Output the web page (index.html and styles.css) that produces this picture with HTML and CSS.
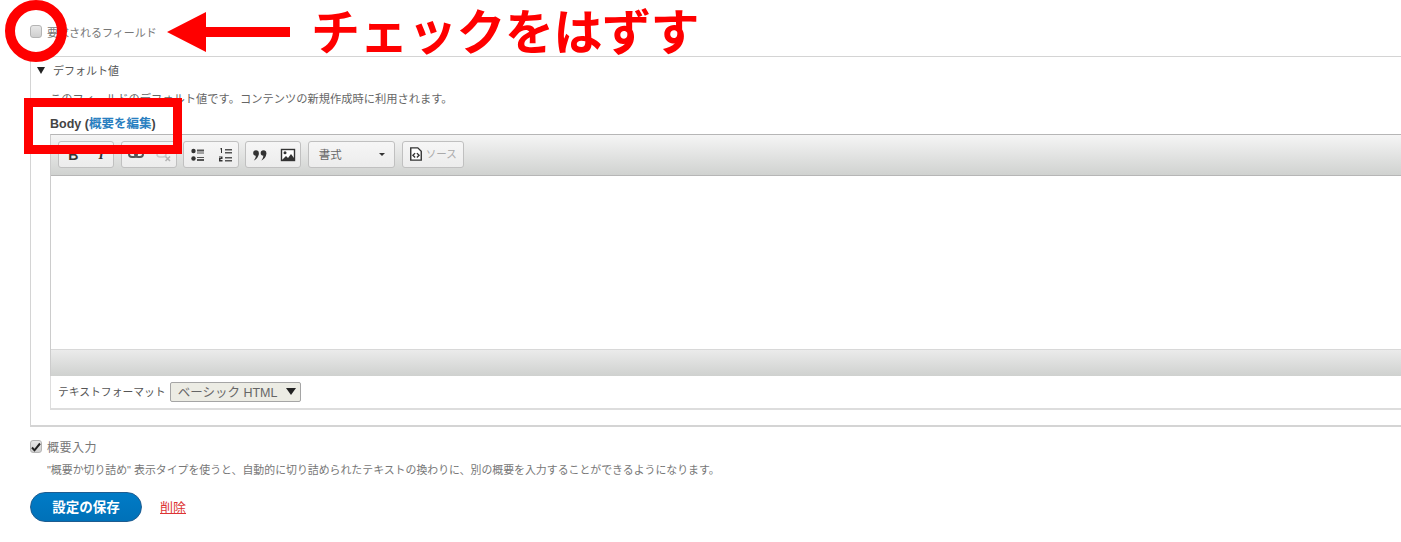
FILE: index.html
```html
<!DOCTYPE html>
<html lang="ja">
<head>
<meta charset="utf-8">
<title>フィールド設定</title>
<link rel="stylesheet" href="styles.css">
</head>
<body>
<main class="page">
  <label class="check-row required-row"><span class="box"></span><span>要求されるフィールド</span></label>

  <section class="fieldset">
    <div class="legend"><span class="tri"></span><span>デフォルト値</span></div>
    <p class="intro">このフィールドのデフォルト値です。コンテンツの新規作成時に利用されます。</p>
    <div class="body-label">Body (<a href="#">概要を編集</a>)</div>

    <div class="editor">
      <div class="toolbar">
        <div class="group">
          <span class="tool"><b class="bold">B</b></span>
          <span class="tool"><i class="ital">I</i></span>
        </div>
        <div class="group">
          <span class="tool">
            <svg width="16" height="16" viewBox="0 0 16 16"><rect x="1" y="4" width="8" height="6" rx="3" fill="none" stroke="#555" stroke-width="2"/><rect x="7" y="4" width="8" height="6" rx="3" fill="none" stroke="#555" stroke-width="2"/></svg>
          </span>
          <span class="tool">
            <svg width="16" height="16" viewBox="0 0 16 16"><rect x="1" y="4" width="9" height="6" rx="3" fill="none" stroke="#ccc" stroke-width="1.600"/><path d="M9.500 9.500l4.500 4.500M14 9.500L9.500 14" stroke="#b4b4b4" stroke-width="1.600"/></svg>
          </span>
        </div>
        <div class="group">
          <span class="tool">
            <svg width="16" height="16" viewBox="0 0 16 16"><circle cx="3.500" cy="4" r="2.200" fill="#333"/><circle cx="3.500" cy="11.500" r="2.200" fill="#333"/><path d="M7 2.500h7v2H7zM7 5.500h7v1H7zM7 10h7v1H7zM7 12h7v2H7z" fill="#555"/></svg>
          </span>
          <span class="tool">
            <svg width="16" height="16" viewBox="0 0 16 16"><path d="M2.500 1h1.500v5H3V2.500h-.5zM1 9.500h3.500V12H2.500v1h2v1.500H1V11h2v-.500H1z" fill="#333"/><path d="M7 2h7v1.500H7zM7 5h7v1.500H7zM7 10h7v1.500H7zM7 13h7v1.500H7z" fill="#555"/></svg>
          </span>
        </div>
        <div class="group">
          <span class="tool">
            <svg width="16" height="16" viewBox="0 0 16 16"><circle cx="4" cy="6" r="2.800" fill="#333"/><path d="M6.800 6c0 4-2 6-5 7.500 1.500-1.500 2-3.500 2-5z" fill="#333"/><circle cx="11.500" cy="6" r="2.800" fill="#333"/><path d="M14.300 6c0 4-2 6-5 7.500 1.500-1.500 2-3.500 2-5z" fill="#333"/></svg>
          </span>
          <span class="tool">
            <svg width="16" height="16" viewBox="0 0 16 16"><rect x="1.500" y="2.500" width="13" height="11" fill="#fff" stroke="#333" stroke-width="1.400"/><circle cx="5" cy="5.800" r="1.500" fill="#333"/><path d="M2 13l4-4 2 2 3-4 3 4v2z" fill="#333"/></svg>
          </span>
        </div>
        <div class="group combo"><span>書式</span><span class="caret"></span></div>
        <div class="group source">
          <svg width="14" height="14" viewBox="0 0 16 16"><path d="M2 1h8l4 4v10H2z" fill="#fff" stroke="#333" stroke-width="1.600"/><path d="M7 7L4.500 9.500 7 12M9 7l2.500 2.500L9 12" fill="none" stroke="#333" stroke-width="1.600"/></svg>
          <span>ソース</span>
        </div>
      </div>
      <div class="edit-area"></div>
      <div class="bottom-bar"></div>
    </div>

    <div class="format-wrap">
      <span class="format-label">テキストフォーマット</span>
      <span class="select">ベーシック HTML<span class="sel-tri"></span></span>
    </div>
  </section>

  <label class="check-row summary-row"><span class="box checked"><svg width="10" height="10" viewBox="0 0 10 10"><path d="M1 5.500l2.500 2.800L9 1.500" fill="none" stroke="#222" stroke-width="2"/></svg></span><span>概要入力</span></label>
  <p class="hint">"概要か切り詰め" 表示タイプを使うと、自動的に切り詰められたテキストの換わりに、別の概要を入力することができるようになります。</p>
  <div class="actions">
    <span class="save">設定の保存</span>
    <a class="delete" href="#">削除</a>
  </div>
</main>

<div class="mark-circle"></div>
<div class="mark-rect"></div>
<svg class="mark-arrow" width="124" height="40" viewBox="0 0 124 40"><path d="M0 20L39 0v15h84v10H39v15z" fill="#ff0000"/></svg>
<div class="mark-text">チェックをはずす</div>
</body>
</html>
```
FILE: styles.css
```css
* { box-sizing: border-box; }
html, body { margin: 0; padding: 0; background: #fff; overflow: hidden; }
body {
  width: 1401px;
  height: 542px;
  position: relative;
  font-family: "Liberation Sans", "Noto Sans CJK JP", sans-serif;
  font-size: 11px;
  color: #666;
}
.page { padding: 22px 0 0 30px; width: 1440px; }
.check-row { display: flex; align-items: center; gap: 5px; height: 19px; font-size: 11px; color: #777; }
.box {
  width: 12px; height: 13px;
  border: 1px solid #b4b4b4; border-radius: 3px;
  background: linear-gradient(#e8e8e8, #cfcfcf);
  display: flex; align-items: center; justify-content: center;
}
.fieldset {
  margin-top: 15px;
  height: 371px;
  border: 1px solid #d4d4d4;
  border-width: 1px 1px 2px 1px;
  padding: 5px 0 0 19px;
}
.legend { display: flex; align-items: center; height: 16px; margin-left: -13px; color: #555; font-size: 11px; gap: 8px; }
.tri { width: 0; height: 0; border: 4px solid transparent; border-top: 7px solid #222; border-bottom: 0; }
.intro { margin: 13px 0 0; line-height: 16px; font-size: 11.250px; color: #666; }
.body-label { margin-top: 9px; line-height: 16px; font-weight: bold; color: #444; font-size: 12.500px; }
.body-label a { color: #2a7fc0; text-decoration: none; }
.editor { margin-top: 2px; border: 1px solid #b6b6b6; border-width: 1px 0 0 1px; border-left-color: #ccc; }
.toolbar {
  height: 41px;
  display: flex; align-items: flex-start; gap: 6.400px;
  padding: 6px 0 0 7.300px;
  background: linear-gradient(#f5f5f5, #d0d2d0);
  border-bottom: 1px solid #b6b6b6;
}
.group {
  display: flex; height: 27px; width: 56px;
  border: 1px solid #c0c0c0; border-radius: 3px;
  background: linear-gradient(#f6f6f6, #ececec);
}
.tool { flex: 0 0 28px; display: flex; align-items: center; justify-content: center; }
.bold { font-size: 14px; font-weight: bold; color: #333; }
.ital { font-family: "Liberation Serif", serif; font-size: 14px; font-weight: bold; color: #333; }
.combo { width: 87.500px; align-items: center; padding: 0 9px 2px 10px; justify-content: space-between; color: #666; font-size: 11.500px; }
.caret { width: 0; height: 0; border: 3px solid transparent; border-top-color: #333; border-bottom: 0; margin-top: 2px; }
.source { width: 62px; align-items: center; padding: 0 0 2px 6px; gap: 3px; color: #aaa; font-size: 10.500px; }
.edit-area { height: 173px; background: #fff; }
.bottom-bar {
  height: 27px;
  background: linear-gradient(#ebebeb, #cfd1cf);
  border-top: 1px solid #d8d8d8;
}
.format-wrap {
  height: 34px;
  display: flex; align-items: center; gap: 4px;
  padding-left: 7px;
  border: 1px solid #ddd; border-width: 0 0 2px 1px;
  font-size: 10.800px; color: #555;
}
.format-label { margin-bottom: 2px; }
.select {
  width: 131px; height: 20px;
  display: flex; align-items: center; justify-content: space-between;
  padding: 0 4px 2px 7px;
  background: #ecece4;
  border: 1px solid #a5a5a5; border-radius: 2px;
  font-size: 12.500px; color: #666;
}
.sel-tri { width: 0; height: 0; border: 5px solid transparent; border-top: 7px solid #222; border-bottom: 0; }
.summary-row { margin-top: 10px; font-size: 12px; letter-spacing: .5px; }
.hint { margin: 6px 0 0 17px; line-height: 16px; font-size: 10.900px; color: #777; }
.actions { display: flex; align-items: center; gap: 18px; margin-top: 14px; }
.save {
  width: 112px; height: 30px; border-radius: 15px; padding-bottom: 2px;
  background: linear-gradient(#007bc6, #0071b8);
  border: 1px solid #1e5c90;
  color: #fff; font-weight: bold; font-size: 13.500px;
  display: flex; align-items: center; justify-content: center;
}
.delete { color: #d33; font-size: 13px; margin-bottom: 2px; }
.mark-circle {
  position: absolute; left: 5px; top: 0;
  width: 62px; height: 62px;
  border: 10px solid #ff0000; border-radius: 50%;
}
.mark-rect {
  position: absolute; left: 24px; top: 98px;
  width: 158px; height: 56px;
  border: 9px solid #ff0000;
}
.mark-arrow { position: absolute; left: 167px; top: 12px; }
.mark-text {
  position: absolute; left: 311px; top: 5px;
  font-weight: bold; font-size: 49px; line-height: 56px;
  color: #ff0000; letter-spacing: -.5px; white-space: nowrap;
}
```
